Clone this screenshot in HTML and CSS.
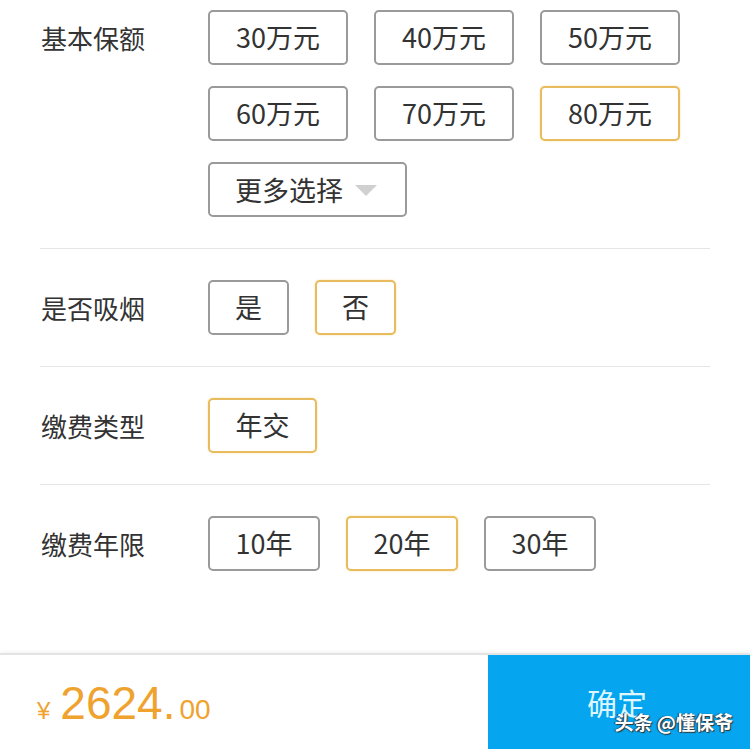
FILE: index.html
```html
<!DOCTYPE html>
<html lang="zh-CN">
<head>
<meta charset="utf-8">
<title>保额选择</title>
<link rel="stylesheet" href="styles.css">
</head>
<body>
<div class="page">
  <div class="form">
    <div class="section first">
      <div class="label">基本保额</div>
      <div class="options amounts">
        <div class="opt w140">30万元</div>
        <div class="opt w140">40万元</div>
        <div class="opt w140">50万元</div>
        <div class="opt w140">60万元</div>
        <div class="opt w140">70万元</div>
        <div class="opt w140 on">80万元</div>
        <div class="opt more">更多选择<span class="caret"></span></div>
      </div>
    </div>
    <div class="section">
      <div class="label">是否吸烟</div>
      <div class="options">
        <div class="opt w81">是</div>
        <div class="opt w81 on">否</div>
      </div>
    </div>
    <div class="section">
      <div class="label">缴费类型</div>
      <div class="options">
        <div class="opt w109 on">年交</div>
      </div>
    </div>
    <div class="section last">
      <div class="label">缴费年限</div>
      <div class="options">
        <div class="opt w112">10年</div>
        <div class="opt w112 on">20年</div>
        <div class="opt w112">30年</div>
      </div>
    </div>
  </div>
  <div class="footer">
    <div class="price"><span class="yen">¥</span><span class="int">2624.</span><span class="dec">00</span></div>
    <div class="confirm">确定</div>
    <div class="watermark">头条 @懂保爷</div>
  </div>
</div>
</body>
</html>
```
FILE: styles.css
```css
* { box-sizing: border-box; }
html, body {
  margin: 0;
  padding: 0;
  background: #fff;
}
body {
  font-family: "Noto Sans CJK SC", "Noto Sans", sans-serif;
  color: #333;
}
.page {
  width: 750px;
  height: 749px;
  display: flex;
  flex-direction: column;
  overflow: hidden;
}
.form {
  margin: 0 40px 0 40px;
}
.section {
  display: flex;
  align-items: flex-start;
  padding: 31px 0 31px 0;
  border-bottom: 1px solid #e6e6e6;
}
.section.first { padding-top: 10px; }
.section.last { border-bottom: none; }
.label {
  width: 168px;
  padding-left: 1px;
  font-size: 26px;
  line-height: 55px;
  color: #333;
  flex: none;
}
.options {
  display: flex;
  flex-wrap: wrap;
  gap: 21px 26px;
  width: 480px;
}
.opt {
  height: 55px;
  border: 2px solid #9a9a9a;
  border-radius: 5px;
  font-size: 27px;
  line-height: 50px;
  text-align: center;
  color: #333;
  background: #fff;
}
.opt.on {
  border-color: #e8bc5e;
  box-shadow: 0 0 2px rgba(240, 200, 100, 0.6);
}
.w140 { width: 140px; }
.w81 { width: 81px; }
.w109 { width: 109px; }
.w112 { width: 112px; }
.opt.more {
  width: 199px;
  display: flex;
  align-items: center;
  padding-left: 25px;
}
.caret {
  display: inline-block;
  margin-left: 12px;
  margin-top: 2px;
  width: 0;
  height: 0;
  border-left: 11px solid transparent;
  border-right: 11px solid transparent;
  border-top: 11px solid #d0d0d0;
}
.footer {
  margin-top: auto;
  height: 96px;
  border-top: 2px solid #e4e4e4;
  box-shadow: 0 -2px 3px rgba(0, 0, 0, 0.04);
  display: flex;
  position: relative;
}
.price {
  flex: 1;
  display: flex;
  align-items: baseline;
  padding-left: 37px;
  padding-top: 21px;
  color: #f0a22e;
  font-family: "Liberation Sans", Arial, sans-serif;
}
.yen {
  font-size: 24px;
  margin-right: 10px;
}
.int {
  font-size: 46px;
}
.dec {
  font-size: 28px;
  margin-left: 4px;
}
.confirm {
  width: 262px;
  background: #05a6ef;
  color: #dff6ff;
  font-size: 30px;
  text-align: center;
  line-height: 94px;
  padding-right: 4px;
}
.watermark {
  position: absolute;
  right: 17px;
  bottom: 14px;
  font-size: 19px;
  font-weight: bold;
  color: #fff;
  text-shadow: 1px 1px 1px #333, -1px 0 1px #333;
}
```
